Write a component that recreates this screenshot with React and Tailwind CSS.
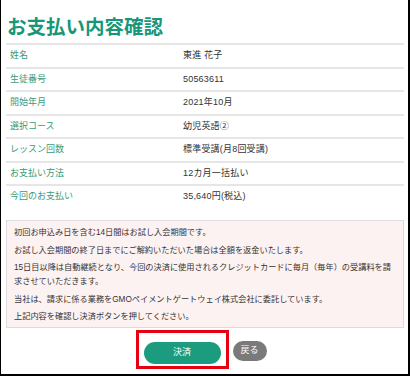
const rows = [
  ["姓名", "東進 花子"],
  ["生徒番号", "50563611"],
  ["開始年月", "2021年10月"],
  ["選択コース", "幼児英語②"],
  ["レッスン回数", "標準受講(月8回受講)"],
  ["お支払い方法", "12カ月一括払い"],
  ["今回のお支払い", "35,640円(税込)"],
];

const notes = [
  "初回お申込み日を含む14日間はお試し入会期間です。",
  "お試し入会期間の終了日までにご解約いただいた場合は全額を返金いたします。",
  "15日目以降は自動継続となり、今回の決済に使用されるクレジットカードに毎月（毎年）の受講料を請求させていただきます。",
  "当社は、請求に係る業務をGMOペイメントゲートウェイ株式会社に委託しています。",
  "上記内容を確認し決済ボタンを押してください。",
];

export default function App() {
  return (
    <div className="w-[410px] h-[376px] bg-white border-l border-r-2 border-b-2 border-black pl-[5px] pr-[4px] font-['Liberation_Sans','Noto_Sans_CJK_JP',sans-serif]">
      <h1 className="pt-[12px] h-[43px] leading-[31px] text-[19.5px] font-bold text-[#17967a] pl-[1px]">
        お支払い内容確認
      </h1>

      <div>
        {rows.map(([label, value]) => (
          <div
            key={label}
            className="grid grid-cols-[177px_1fr] items-center h-[23.5px] border-t-2 border-[#e6e6e6] text-[9px]"
          >
            <div className="pl-[4px] text-[#3a9a78]">{label}</div>
            <div className="text-[#333] tracking-[0.2px]">{value}</div>
          </div>
        ))}
      </div>

      <div className="mt-[12.5px] border border-[#dcdcdc] bg-[#fdf2f2] px-[7px] pt-[5px] pb-[3px] text-[8.2px] leading-[14px] text-[#333]">
        {notes.map((n, i) => (
          <p key={i} className={i < notes.length - 1 ? "mb-[3.5px]" : ""}>
            {n}
          </p>
        ))}
      </div>

      <div className="flex justify-center items-center gap-[12px] mt-[10px]">
        <div className="relative">
          <button className="w-[77px] h-[22px] rounded-full bg-[#1b9c7e] text-white text-[9px]">
            決済
          </button>
          <div className="absolute -left-[8px] -right-[8px] -top-[8px] -bottom-[5px] border-[3px] border-[#e60012]" />
        </div>
        <button className="w-[34px] h-[20px] rounded-full bg-[#7a7a7a] text-white text-[9px]">
          戻る
        </button>
      </div>
    </div>
  );
}
